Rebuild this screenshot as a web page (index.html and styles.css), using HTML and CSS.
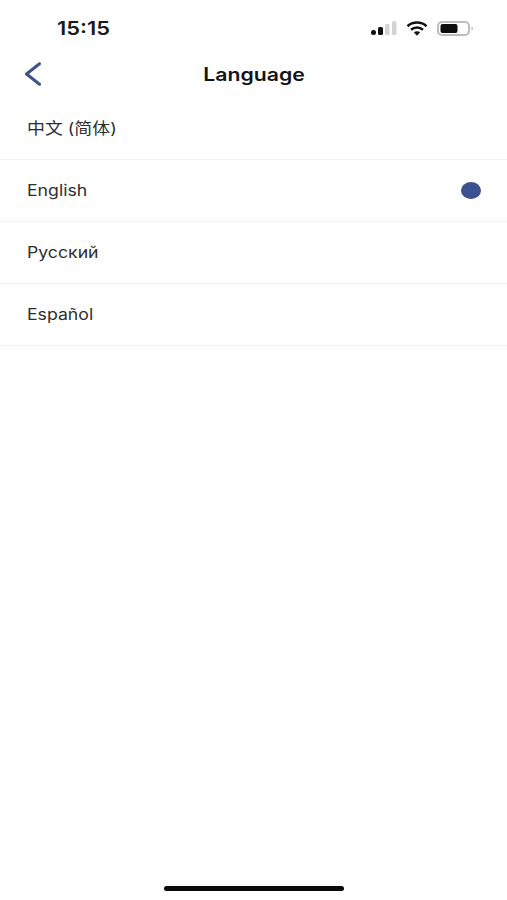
FILE: index.html
```html
<!DOCTYPE html>
<html lang="en">
<head>
<meta charset="utf-8">
<title>Language</title>
<link rel="stylesheet" href="styles.css">
</head>
<body>
<div class="screen">
  <header class="status">
    <span class="time">15:15</span>
    <div class="status-icons">
      <svg class="signal" width="26" height="14" viewBox="0 0 26 14">
        <rect x="0" y="9" width="5" height="5" rx="2.2" fill="#111"/>
        <rect x="7" y="6" width="5" height="8" rx="1.5" fill="#111"/>
        <rect x="14" y="3" width="4.5" height="11" rx="1.5" fill="#d4d4d4"/>
        <rect x="21" y="0" width="4.5" height="14" rx="1.5" fill="#d4d4d4"/>
      </svg>
      <svg class="wifi" width="22" height="15" viewBox="0 0 22 15">
        <path d="M1.5 5.200C6.800.4 15.200.4 20.500 5.200" fill="none" stroke="#111" stroke-width="2.500"/>
        <path d="M5 8.800c3.500-3 8.500-3 12 0" fill="none" stroke="#111" stroke-width="2.500"/>
        <path d="M7.800 11.300c2-1.400 4.400-1.400 6.400 0L11 14.800z" fill="#111"/>
      </svg>
      <svg class="battery" width="37" height="15" viewBox="0 0 37 15">
        <rect x="1" y="1" width="31" height="13" rx="4" fill="none" stroke="#bdbdbd" stroke-width="2"/>
        <rect x="3.500" y="3" width="17" height="9" rx="2" fill="#0c0c0c"/>
        <path d="M34.500 6v3c1-.3 1.500-.8 1.500-1.500s-.5-1.200-1.500-1.500z" fill="#b0b0b0"/>
      </svg>
    </div>
  </header>
  <nav class="nav">
    <svg class="back" width="18" height="24" viewBox="0 0 18 24">
      <path d="M15.500 1.800 2.500 12l13 10.200" fill="none" stroke="#3f5289" stroke-width="3" stroke-linecap="round" stroke-linejoin="round"/>
    </svg>
    <h1 class="title"><span class="stretch">Language</span></h1>
  </nav>
  <ul class="list">
    <li class="row"><span class="label cjk">中文 (简体)</span></li>
    <li class="row"><span class="label">English</span><span class="dot"></span></li>
    <li class="row"><span class="label">Русский</span></li>
    <li class="row"><span class="label">Español</span></li>
  </ul>
  <div class="home"></div>
</div>
</body>
</html>
```

FILE: styles.css
```css
* { box-sizing: border-box; }
html, body { margin: 0; padding: 0; background: #fff; }
.screen {
  width: 507px;
  height: 900px;
  display: flex;
  flex-direction: column;
  font-family: Inter, "Noto Sans CJK SC", sans-serif;
  overflow: hidden;
}
.status {
  height: 50px;
  padding: 6px 33px 0 57px;
  display: flex;
  align-items: center;
  justify-content: space-between;
}
.time {
  display: inline-block;
  font-size: 19px;
  font-weight: 600;
  color: #1a1a1a;
  transform: scaleX(1.15);
  transform-origin: left center;
}
.status-icons { display: flex; align-items: center; gap: 9px; }
.nav {
  height: 48px;
  padding: 0 0 0 24px;
  display: flex;
  align-items: center;
  position: relative;
}
.back { display: block; }
.title {
  position: absolute;
  left: 1px;
  right: 0;
  margin: 0;
  text-align: center;
  font-size: 18px;
  font-weight: 600;
  color: #141414;
}
.stretch {
  display: inline-block;
  transform: scaleX(1.18);
}
.list { list-style: none; margin: 0; padding: 0; }
.row {
  height: 62px;
  padding: 0 26px 0 27px;
  display: flex;
  align-items: center;
  justify-content: space-between;
  border-bottom: 1px solid #f3f3f3;
  font-size: 15.500px;
  color: #2e2e2e;
}
.label {
  display: inline-block;
  line-height: 1;
  transform: scaleX(1.14);
  transform-origin: left center;
}
.cjk { transform: scaleX(1.155); }
.dot {
  width: 20px;
  height: 17px;
  border-radius: 50%;
  background: #3d5190;
}
.home {
  margin-top: auto;
  margin-bottom: 9px;
  align-self: center;
  width: 180px;
  height: 5px;
  border-radius: 3px;
  background: #0a0a0a;
}
```
